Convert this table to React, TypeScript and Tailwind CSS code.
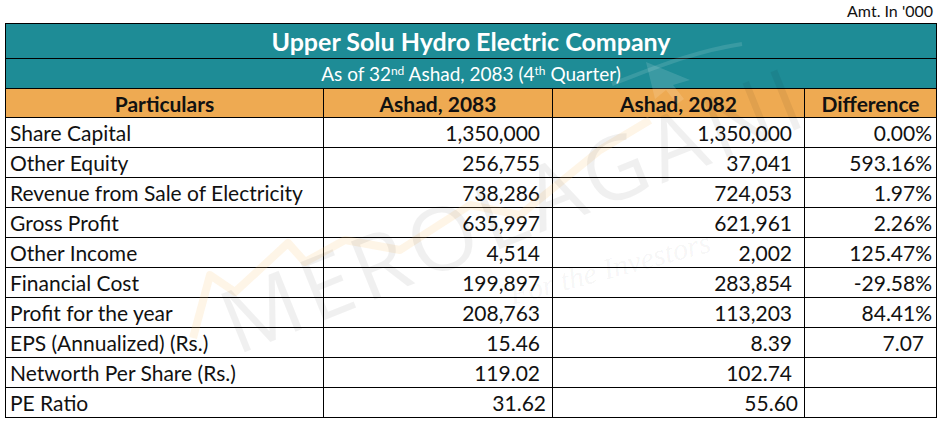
const rows: { label: string; a: string; b: string; d: string; pa?: string; pb?: string; pd?: string }[] = [
  { label: "Share Capital", a: "1,350,000", b: "1,350,000", d: "0.00%" },
  { label: "Other Equity", a: "256,755", b: "37,041", d: "593.16%" },
  { label: "Revenue from Sale of Electricity", a: "738,286", b: "724,053", d: "1.97%" },
  { label: "Gross Profit", a: "635,997", b: "621,961", d: "2.26%" },
  { label: "Other Income", a: "4,514", b: "2,002", d: "125.47%" },
  { label: "Financial Cost", a: "199,897", b: "283,854", d: "-29.58%" },
  { label: "Profit for the year", a: "208,763", b: "113,203", d: "84.41%" },
  { label: "EPS (Annualized) (Rs.)", a: "15.46", b: "8.39", d: "7.07", pd: "pr-[12px]" },
  { label: "Networth Per Share (Rs.)", a: "119.02", b: "102.74", d: "" },
  { label: "PE Ratio", a: "31.62", b: "55.60", d: "", pa: "pr-[6px]", pb: "pr-[6px]" },
];

// faint "Mero Lagani" watermark lying over the table
function Watermark() {
  return (
    <div className="pointer-events-none absolute inset-0 overflow-hidden">
      <svg className="absolute left-0 top-0" width="943" height="424" viewBox="0 0 943 424">
        <polyline
          points="193,338 210,275 235,292 288,243 305,262 345,240 400,250 470,205 520,215 600,150 650,120"
          fill="none"
          stroke="#f7c77c"
          strokeOpacity="0.18"
          strokeWidth="8"
          strokeLinejoin="round"
        />
        <path d="M612 84 C650 70 690 52 742 44" fill="none" stroke="#ffffff" strokeOpacity="0.12" strokeWidth="4" />
        <path
          d="M646 62 L690 80 L673 85 L684 99 L677 104 L666 90 L655 99 Z"
          fill="#ffffff"
          fillOpacity="0.13"
        />
      </svg>
      <div
        className="absolute left-[224px] top-[280px] origin-left -rotate-[22deg] whitespace-nowrap text-[88px] leading-none tracking-[6px] text-black/[0.06]"
        style={{ fontFamily: "'Open Sans', 'Liberation Sans', sans-serif" }}
      >
        MEROLAGANI
      </div>
      <div
        className="absolute left-[510px] top-[280px] origin-left -rotate-[15deg] whitespace-nowrap text-[30px] italic leading-none text-black/[0.05]"
        style={{ fontFamily: "'Liberation Serif', serif" }}
      >
        For the Investors
      </div>
    </div>
  );
}

export default function App() {
  return (
    <div
      className="relative h-[424px] w-[943px] bg-white text-[#111]"
      style={{ fontFamily: "Lato, 'Open Sans', sans-serif" }}
    >
      <div className="flex h-[23px] items-start justify-end pr-[10px] pt-[2px] text-[16px] leading-[18px]">
        Amt. In &#39;000
      </div>
      <table className="ml-[5px] w-[931px] table-fixed border-collapse">
        <colgroup>
          <col className="w-[318px]" />
          <col className="w-[229px]" />
          <col className="w-[252px]" />
          <col className="w-[132px]" />
        </colgroup>
        <tbody>
          <tr className="h-[35px] bg-[#1e8c96] text-white">
            <td colSpan={4} className="border border-black text-center text-[25px] font-bold leading-none">
              Upper Solu Hydro Electric Company
            </td>
          </tr>
          <tr className="h-[30px] bg-[#1e8c96] text-white">
            <td colSpan={4} className="border border-black text-center text-[19px] leading-none">
              As of 32<sup className="text-[12px]">nd</sup> Ashad, 2083 (4<sup className="text-[12px]">th</sup> Quarter)
            </td>
          </tr>
          <tr className="h-[29px] bg-[#eeaa52] text-[21px] font-bold">
            <td className="border border-black text-center leading-none">Particulars</td>
            <td className="border border-black text-center leading-none">Ashad, 2083</td>
            <td className="border border-black text-center leading-none">Ashad, 2082</td>
            <td className="border border-black text-center leading-none">Difference</td>
          </tr>
          {rows.map((r) => (
            <tr key={r.label} className="h-[30px] text-[21px]">
              <td className="border border-black pl-[4px] leading-none">{r.label}</td>
              <td className={`border border-black text-right leading-none ${r.pa ?? "pr-[12px]"}`}>{r.a}</td>
              <td className={`border border-black text-right leading-none ${r.pb ?? "pr-[12px]"}`}>{r.b}</td>
              <td className={`border border-black text-right leading-none ${r.pd ?? "pr-[4px]"}`}>{r.d}</td>
            </tr>
          ))}
        </tbody>
      </table>
      <Watermark />
    </div>
  );
}
